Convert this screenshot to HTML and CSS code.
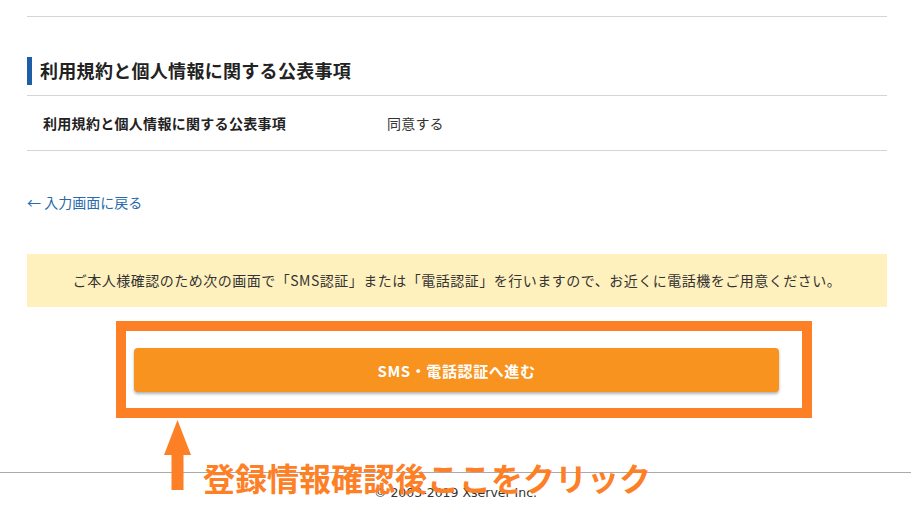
FILE: index.html
```html
<!DOCTYPE html>
<html lang="ja">
<head>
<meta charset="utf-8">
<title>確認画面</title>
<link rel="stylesheet" href="styles.css">
</head>
<body>
<div class="page">
  <div class="top-rule"></div>
  <h2 class="section-title">利用規約と個人情報に関する公表事項</h2>
  <div class="table">
    <div class="row">
      <div class="label">利用規約と個人情報に関する公表事項</div>
      <div class="value">同意する</div>
    </div>
  </div>
  <a class="back" href="#">← 入力画面に戻る</a>
  <div class="notice">ご本人様確認のため次の画面で「SMS認証」または「電話認証」を行いますので、お近くに電話機をご用意ください。</div>
  <div class="actions">
    <button class="btn">SMS・電話認証へ進む</button>
  </div>
</div>
<footer class="footer">© 2003-2019 Xserver Inc.</footer>

<div class="callout-frame"></div>
<svg class="callout-arrow" width="27" height="70" viewBox="0 0 27 70">
  <polygon points="13.5,0 27,35 0,35" fill="#fd7f26"/>
  <rect x="7.5" y="34" width="12" height="36" fill="#fd7f26"/>
</svg>
<div class="callout-text">登録情報確認後ここをクリック</div>
</body>
</html>
```

FILE: styles.css
```css
html, body {
  margin: 0;
  padding: 0;
  background: #fff;
}
body {
  position: relative;
  font-family: "Noto Sans CJK JP", "Noto Sans", sans-serif;
  color: #333;
  width: 911px;
  height: 512px;
  overflow: hidden;
}
.page {
  width: 860px;
  margin-left: 27px;
}
.top-rule {
  height: 16px;
  border-bottom: 1px solid #d4d4d4;
}
.section-title {
  margin: 40px 0 0;
  height: 28px;
  line-height: 27px;
  border-left: 5px solid #1d5fa6;
  padding-left: 8px;
  font-size: 18px;
  font-weight: bold;
  color: #222;
  letter-spacing: 0.3px;
}
.table {
  margin-top: 10px;
  border-top: 1px solid #d4d4d4;
  border-bottom: 1px solid #d4d4d4;
}
.row {
  display: grid;
  grid-template-columns: 344px 1fr;
  padding-left: 16px;
  height: 54px;
  align-items: center;
  font-size: 14px;
}
.label {
  font-weight: bold;
  color: #222;
  letter-spacing: 0.3px;
}
.value {
  color: #333;
  letter-spacing: 0.2px;
}
.back {
  display: block;
  margin-top: 41px;
  line-height: 20px;
  font-size: 14px;
  color: #2a69ad;
  text-decoration: none;
  width: max-content;
}
.notice {
  margin-top: 42px;
  height: 53px;
  line-height: 53px;
  background: #fff1be;
  text-align: center;
  font-size: 14px;
  color: #333;
  letter-spacing: 0.5px;
}
.actions {
  margin-top: 41px;
  padding: 0 108px 0 107px;
}
.btn {
  display: block;
  width: 100%;
  height: 44px;
  border: none;
  border-radius: 4px;
  background: #f7931e;
  color: #fff;
  font-family: "Noto Sans CJK JP", sans-serif;
  font-size: 15px;
  font-weight: bold;
  letter-spacing: 0.6px;
  box-shadow: 0 2px 3px rgba(0, 0, 0, 0.3);
}
.footer {
  margin-top: 80px;
  border-top: 1px solid #aaa;
  padding-top: 12px;
  text-align: center;
  font-family: "DejaVu Sans", sans-serif;
  font-size: 12.5px;
  color: #333;
}
.callout-frame {
  position: absolute;
  left: 116px;
  top: 321px;
  width: 696px;
  height: 97px;
  box-sizing: border-box;
  border: 10px solid #fd7f26;
}
.callout-arrow {
  position: absolute;
  left: 164px;
  top: 420px;
}
.callout-text {
  position: absolute;
  left: 203px;
  top: 456px;
  line-height: 42px;
  font-size: 32px;
  font-weight: bold;
  color: #fd7f26;
  white-space: nowrap;
}
```
